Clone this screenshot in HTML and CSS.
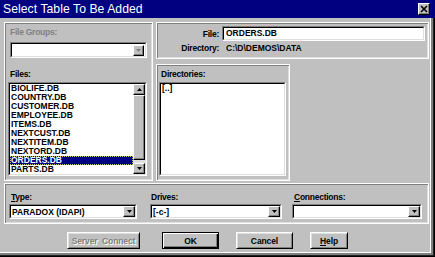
FILE: index.html
```html
<!DOCTYPE html>
<html>
<head>
<meta charset="utf-8">
<link rel="stylesheet" href="styles.css">
</head>
<body>
<div class="win">
  <div class="titlebar">
    <span class="title">Select Table To Be Added</span>
    <span class="close"><svg width="8" height="8" viewBox="0 0 8 8"><path d="M1 1 L7 7 M7 1 L1 7" stroke="#000" stroke-width="1.6" fill="none"/></svg></span>
  </div>
  <div class="client">
    <div class="toprow">
      <div class="panel leftpanel">
        <div class="lbl dis">File Groups:</div>
        <div class="combo groups">
          <div class="combo-in">
            <span class="combo-text"></span>
            <span class="combo-btn"><svg width="5" height="3" viewBox="0 0 5 3"><path d="M0 0 H5 L2.5 3 Z" fill="#808080"/></svg></span>
          </div>
        </div>
        <div class="lbl files-lbl">Files:</div>
        <div class="lb files">
          <div class="lb-in">
            <ul class="items">
              <li>BIOLIFE.DB</li>
              <li>COUNTRY.DB</li>
              <li>CUSTOMER.DB</li>
              <li>EMPLOYEE.DB</li>
              <li>ITEMS.DB</li>
              <li>NEXTCUST.DB</li>
              <li>NEXTITEM.DB</li>
              <li>NEXTORD.DB</li>
              <li class="sel">ORDERS.DB</li>
              <li>PARTS.DB</li>
            </ul>
            <div class="vscroll">
              <div class="sbtn up"><svg width="5" height="3" viewBox="0 0 5 3"><path d="M0 3 H5 L2.5 0 Z" fill="#000"/></svg></div>
              <div class="thumb"></div>
              <div class="track"></div>
              <div class="sbtn down"><svg width="5" height="3" viewBox="0 0 5 3"><path d="M0 0 H5 L2.5 3 Z" fill="#000"/></svg></div>
            </div>
          </div>
        </div>
      </div>
      <div class="rightcol">
        <div class="panel fileinfo">
          <div class="fi-row">
            <span class="fi-lbl">File:</span>
            <div class="edit"><div class="edit-in">ORDERS.DB</div></div>
          </div>
          <div class="fi-row dirrow">
            <span class="fi-lbl">Directory:</span>
            <span class="fi-val">C:\D\DEMOS\DATA</span>
          </div>
        </div>
        <div class="panel dirs">
          <div class="lbl">Directories:</div>
          <div class="lb dirlist">
            <div class="lb-in">
              <ul class="items"><li>[..]</li></ul>
            </div>
          </div>
        </div>
      </div>
    </div>
    <div class="panel bottompanel">
      <div class="grp g-type">
        <div class="lbl"><u>T</u>ype:</div>
        <div class="combo">
          <div class="combo-in">
            <span class="combo-text">PARADOX (IDAPI)</span>
            <span class="combo-btn"><svg width="5" height="3" viewBox="0 0 5 3"><path d="M0 0 H5 L2.5 3 Z" fill="#000"/></svg></span>
          </div>
        </div>
      </div>
      <div class="grp g-drives">
        <div class="lbl">Drives:</div>
        <div class="combo">
          <div class="combo-in">
            <span class="combo-text">[-c-]</span>
            <span class="combo-btn"><svg width="5" height="3" viewBox="0 0 5 3"><path d="M0 0 H5 L2.5 3 Z" fill="#000"/></svg></span>
          </div>
        </div>
      </div>
      <div class="grp g-conn">
        <div class="lbl"><u>C</u>onnections:</div>
        <div class="combo">
          <div class="combo-in">
            <span class="combo-text"></span>
            <span class="combo-btn"><svg width="5" height="3" viewBox="0 0 5 3"><path d="M0 0 H5 L2.5 3 Z" fill="#000"/></svg></span>
          </div>
        </div>
      </div>
    </div>
    <div class="buttons">
      <div class="btn b-server disabled">Server&nbsp; Connect</div>
      <div class="btn b-ok default">OK</div>
      <div class="btn b-cancel">Cancel</div>
      <div class="btn b-help"><u>H</u>elp</div>
    </div>
  </div>
</div>
</body>
</html>
```

FILE: styles.css
```css
* { box-sizing: border-box; }
html, body { margin: 0; padding: 0; background: #c0c0c0; }
ul { margin: 0; padding: 0; list-style: none; }

.win {
  width: 435px;
  height: 257px;
  background: #c0c0c0;
  display: flex;
  flex-direction: column;
  overflow: hidden;
  font-family: "Liberation Sans", Arial, sans-serif;
  font-weight: bold;
  font-size: 8.5px;
  color: #000;
}

.titlebar {
  height: 18px;
  flex: none;
  background: #000080;
  color: #fff;
  display: flex;
  align-items: center;
  justify-content: space-between;
  padding: 0 5px 0 3px;
}
.title {
  font-size: 12.2px;
  font-weight: normal;
  letter-spacing: 0.05px;
}
.close {
  width: 12px;
  height: 12px;
  background: #c0c0c0;
  border: 1px solid;
  border-color: #fff #000 #000 #fff;
  box-shadow: inset -1px -1px 0 #808080;
  display: flex;
  align-items: center;
  justify-content: center;
}

.client {
  flex: 1;
  display: flex;
  flex-direction: column;
  padding: 4px 6px 0 4px;
  box-shadow:
    inset -1px -1px 0 #000,
    inset -2px -2px 0 #202020,
    inset -3px -3px 0 #808080,
    inset -4px -4px 0 #808080,
    inset -5px -5px 0 #fff;
}

.panel {
  border: 1px solid #fff;
  box-shadow: inset 1px 1px 0 #808080, inset -1px -1px 0 #dfdfdf;
  padding: 1px;
}

.lbl {
  height: 11px;
  line-height: 11px;
  letter-spacing: -0.25px;
  white-space: nowrap;
}
.lbl.dis { color: #808080; }

/* top row */
.toprow {
  display: flex;
  height: 159px;
  flex: none;
}
.leftpanel {
  width: 149px;
  height: 159px;
  padding: 4px 0 0 3px;
}
.leftpanel .lbl { padding-left: 2px; }
.combo.groups {
  margin-top: 4px;
  margin-left: 2px;
  width: 137px;
  height: 16px;
}
.leftpanel .files-lbl { margin-top: 11px; }
.lb.files {
  margin-top: 2px;
  width: 139px;
}

.rightcol {
  margin-left: 3px;
  width: 273px;
  display: flex;
  flex-direction: column;
}
.fileinfo {
  height: 37px;
  padding: 3px 0 0 1px;
}
.fi-row {
  display: flex;
  align-items: center;
  height: 15px;
}
.fi-row.dirrow {
  margin-top: 1px;
  height: 11px;
}
.fi-lbl {
  width: 61px;
  text-align: right;
  letter-spacing: -0.25px;
  flex: none;
}
.edit {
  margin-left: 3px;
  width: 203px;
  height: 15px;
  border: 1px solid;
  border-color: #808080 #fff #fff #808080;
}
.edit-in {
  height: 100%;
  border: 1px solid;
  border-color: #000 #dfdfdf #dfdfdf #000;
  background: #fff;
  padding-left: 2px;
  line-height: 11px;
}
.fi-val {
  margin-left: 7px;
}

.dirs {
  margin-top: 5px;
  width: 134px;
  height: 117px;
  padding: 4px 0 0 1px;
}
.dirs .lbl { padding-left: 3px; }
.lb.dirlist {
  margin-top: 2px;
  margin-left: 1px;
  width: 127px;
}

/* listbox */
.lb {
  height: 94px;
  border: 1px solid;
  border-color: #808080 #fff #fff #808080;
}
.lb-in {
  height: 100%;
  border: 1px solid;
  border-color: #000 #dfdfdf #dfdfdf #000;
  background: #fff;
  display: flex;
}
.items {
  flex: 1;
}
.items li {
  height: 9px;
  line-height: 9px;
  padding-left: 1px;
  white-space: nowrap;
}
.items li.sel {
  background: #000080;
  color: #fff;
  outline: 1px dotted #c8c860;
  outline-offset: -1px;
}
.vscroll {
  width: 12px;
  flex: none;
  display: flex;
  flex-direction: column;
  background: #c0c0c0;
}
.sbtn, .thumb {
  background: #c0c0c0;
  border: 1px solid;
  border-color: #fff #000 #000 #fff;
  box-shadow: inset -1px -1px 0 #808080;
  display: flex;
  align-items: center;
  justify-content: center;
}
.sbtn { height: 11px; }
.thumb { height: 65px; }
.track { flex: 1; background: #e0e0e0; }

/* combos */
.combo {
  height: 15px;
  border: 1px solid;
  border-color: #808080 #fff #fff #808080;
}
.combo-in {
  height: 100%;
  border: 1px solid;
  border-color: #000 #dfdfdf #dfdfdf #000;
  background: #fff;
  display: flex;
  align-items: center;
}
.combo-text {
  padding-left: 1px;
  white-space: nowrap;
  flex: 1;
}
.combo-btn {
  width: 12px;
  height: 11px;
  flex: none;
  background: #c0c0c0;
  border: 1px solid;
  border-color: #fff #000 #000 #fff;
  box-shadow: inset -1px -1px 0 #808080;
  display: flex;
  align-items: center;
  justify-content: center;
}
.groups .combo-btn { width: 11px; height: 11px; margin-right: 1px; }

/* bottom panel */
.bottompanel {
  margin-top: 2px;
  height: 41px;
  flex: none;
  display: flex;
  padding: 8px 0 0 4px;
}
.grp .combo { margin-top: 1px; }
.g-type { width: 128px; }
.g-type .lbl { padding-left: 2px; }
.g-drives { width: 132px; margin-left: 13px; }
.g-drives .lbl { padding-left: 1px; }
.g-conn { width: 130px; margin-left: 10px; }
.g-conn .lbl { padding-left: 2px; }

/* buttons */
.buttons {
  display: flex;
  margin-top: 8px;
  padding-left: 63px;
}
.btn {
  height: 17px;
  background: #c0c0c0;
  border: 1px solid;
  border-color: #fff #000 #000 #fff;
  box-shadow: inset 1px 1px 0 #dfdfdf, inset -1px -1px 0 #808080;
  display: flex;
  align-items: center;
  justify-content: center;
  letter-spacing: -0.1px;
  white-space: nowrap;
}
.btn.default {
  border-color: #000;
  box-shadow: inset 1px 1px 0 #fff, inset -1px -1px 0 #000, inset -2px -2px 0 #808080;
}
.btn.disabled {
  color: #808080;
  text-shadow: 1px 1px 0 #fff;
}
.b-server { width: 73px; }
.b-ok { width: 57px; margin-left: 22px; }
.b-cancel { width: 57px; margin-left: 17px; }
.b-help { width: 38px; margin-left: 17px; }
```
